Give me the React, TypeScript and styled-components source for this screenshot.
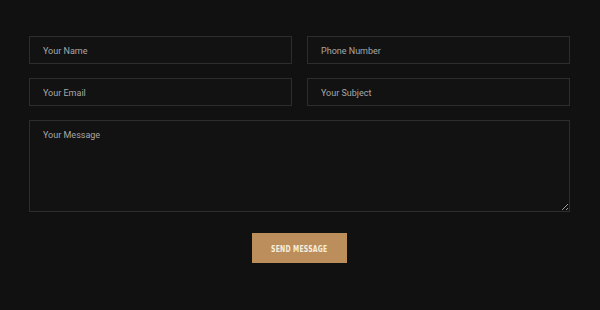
import React from "react";
import styled, { createGlobalStyle } from "styled-components";

const GlobalStyle = createGlobalStyle`
  html, body {
    margin: 0;
    padding: 0;
    background: #111111;
  }
`;

const App = () => (
  <>
    <GlobalStyle />
    <Page>
      <Form onSubmit={e => e.preventDefault()}>
        <Row>
          <Field placeholder="Your Name" />
          <Field placeholder="Phone Number" />
        </Row>
        <Row>
          <Field placeholder="Your Email" />
          <Field placeholder="Your Subject" />
        </Row>
        <Message placeholder="Your Message" />
        <Actions>
          <SendButton type="submit">
            <ButtonLabel>Send Message</ButtonLabel>
          </SendButton>
        </Actions>
      </Form>
    </Page>
  </>
);

// Styles

const Page = styled.div`
  width: 600px;
  height: 310px;
  box-sizing: border-box;
  padding: 36px 30px 0 29px;
  background: #111111;
`;

const Form = styled.form`
  display: flex;
  flex-direction: column;
  gap: 14px;
`;

const Row = styled.div`
  display: grid;
  grid-template-columns: 1fr 1fr;
  gap: 15px;
`;

const fieldStyle = `
  box-sizing: border-box;
  width: 100%;
  background: #121212;
  border: 1px solid #2d2d2d;
  border-radius: 0;
  color: #cccccc;
  font-family: Roboto, "Liberation Sans", sans-serif;
  font-size: 9px;
  outline: none;
  margin: 0;
  &::placeholder {
    color: #a8a8a8;
  }
`;

const Field = styled.input`
  ${fieldStyle}
  height: 28px;
  padding: 1px 13px 0;
`;

const Message = styled.textarea`
  ${fieldStyle}
  display: block;
  height: 92px;
  padding: 9px 13px;
  resize: vertical;
`;

const Actions = styled.div`
  display: flex;
  justify-content: center;
  padding-top: 7px;
`;

const SendButton = styled.button`
  display: flex;
  align-items: center;
  justify-content: center;
  width: 95px;
  height: 30px;
  padding: 0;
  border: none;
  border-radius: 0;
  background: #bb8e5c;
  cursor: pointer;
`;

const ButtonLabel = styled.span`
  display: inline-block;
  color: #f7eddc;
  font-family: "DejaVu Sans Condensed", "DejaVu Sans", sans-serif;
  font-weight: bold;
  font-size: 9.5px;
  letter-spacing: 0.3px;
  text-transform: uppercase;
  white-space: nowrap;
  transform: scaleX(0.72);
`;

// Export

export default App;
